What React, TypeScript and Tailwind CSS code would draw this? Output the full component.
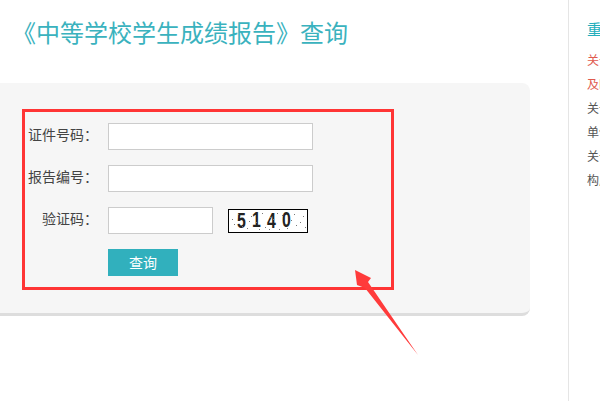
export default function App() {
  const cjk = "font-['Noto_Sans_CJK_SC',sans-serif]";
  const Row = ({ label, short }: { label: string; short?: boolean }) => (
    <div className="flex items-center h-[27px]">
      <label className={`w-[90px] pr-[10px] pb-[4px] text-right text-[14px] leading-[23px] text-[#444] ${cjk}`}>{label}</label>
      <input
        className={`h-[27px] bg-white border border-[#ccc] outline-none ${short ? "w-[105px]" : "w-[205px]"}`}
      />
    </div>
  );
  const dots = [
    [5, 14], [9, 4], [13, 16], [3, 9], [22, 6], [27, 12], [33, 3], [36, 17], [40, 19], [44, 9],
    [50, 19], [53, 5], [41, 7], [62, 10], [67, 15], [74, 6], [71, 12], [18, 18], [65, 4], [58, 18],
    [48, 3], [20, 11], [76, 17], [30, 19],
  ];
  return (
    <div className={`relative flex w-[600px] h-[401px] overflow-hidden bg-white ${cjk}`}>
      <main className="w-[568px] shrink-0 pl-[12px]">
        <h1 className="pt-[15px] h-[83px] text-[24px] leading-[34px] font-normal text-[#3ab2be] whitespace-nowrap">
          《中等学校学生成绩报告》查询
        </h1>
        <section className="-ml-[30px] w-[548px] h-[233px] rounded-[8px] bg-[#f6f6f6] border-b-[3px] border-[#dddddd] pl-[36px] pt-[40px]">
          <div className="flex flex-col gap-[15px]">
            <Row label="证件号码：" />
            <Row label="报告编号：" />
            <div className="flex items-center gap-[15px]">
              <Row label="验证码：" short />
              <div className="relative w-[80px] h-[24px] bg-white border border-black flex items-center pl-[5px] text-[22px] leading-[22px] font-bold font-['Liberation_Sans',sans-serif] text-[#222] overflow-hidden">
                <span className="w-[15px] text-center scale-x-[0.72]">5</span>
                <span className="w-[15px] text-center scale-x-[0.72] -translate-y-[1px]">1</span>
                <span className="w-[15px] text-center scale-x-[0.72]">4</span>
                <span className="w-[15px] text-center scale-x-[0.72] -translate-y-[1px]">0</span>
                <svg className="absolute inset-0" width="78" height="22" viewBox="0 0 78 22">
                  <g fill="#777">
                    {dots.map(([x, y], i) => (
                      <rect key={i} x={x} y={y} width="1" height="1" />
                    ))}
                  </g>
                </svg>
              </div>
            </div>
            <button className="ml-[90px] w-[70px] h-[27px] bg-[#31b0bd] text-white text-[14px] leading-[27px]">
              查询
            </button>
          </div>
        </section>
      </main>
      <aside className="flex-1 border-l border-[#e5e5e5] pl-[18px] whitespace-nowrap overflow-hidden">
        <h2 className="pt-[19px] h-[48px] text-[15px] leading-[20px] font-normal text-[#22aebc]">重要提示</h2>
        <ul className="text-[12px] leading-[24px]">
          <li className="text-[#e05a4e]">关于成绩报告</li>
          <li className="text-[#e05a4e]">及时查询</li>
          <li className="text-[#555]">关于证件号码</li>
          <li className="text-[#555]">单位</li>
          <li className="text-[#555]">关于报告</li>
          <li className="text-[#555]">构成</li>
        </ul>
      </aside>
      <div className="absolute left-[22px] top-[109px] w-[372px] h-[181px] border-[3px] border-[#ff3535] pointer-events-none" />
      <svg className="absolute inset-0 pointer-events-none" width="600" height="401" viewBox="0 0 600 401">
        <polygon points="355,270 371,278 368,282 418,355 365,288 357,285" fill="#ff3b3b" />
      </svg>
    </div>
  );
}
